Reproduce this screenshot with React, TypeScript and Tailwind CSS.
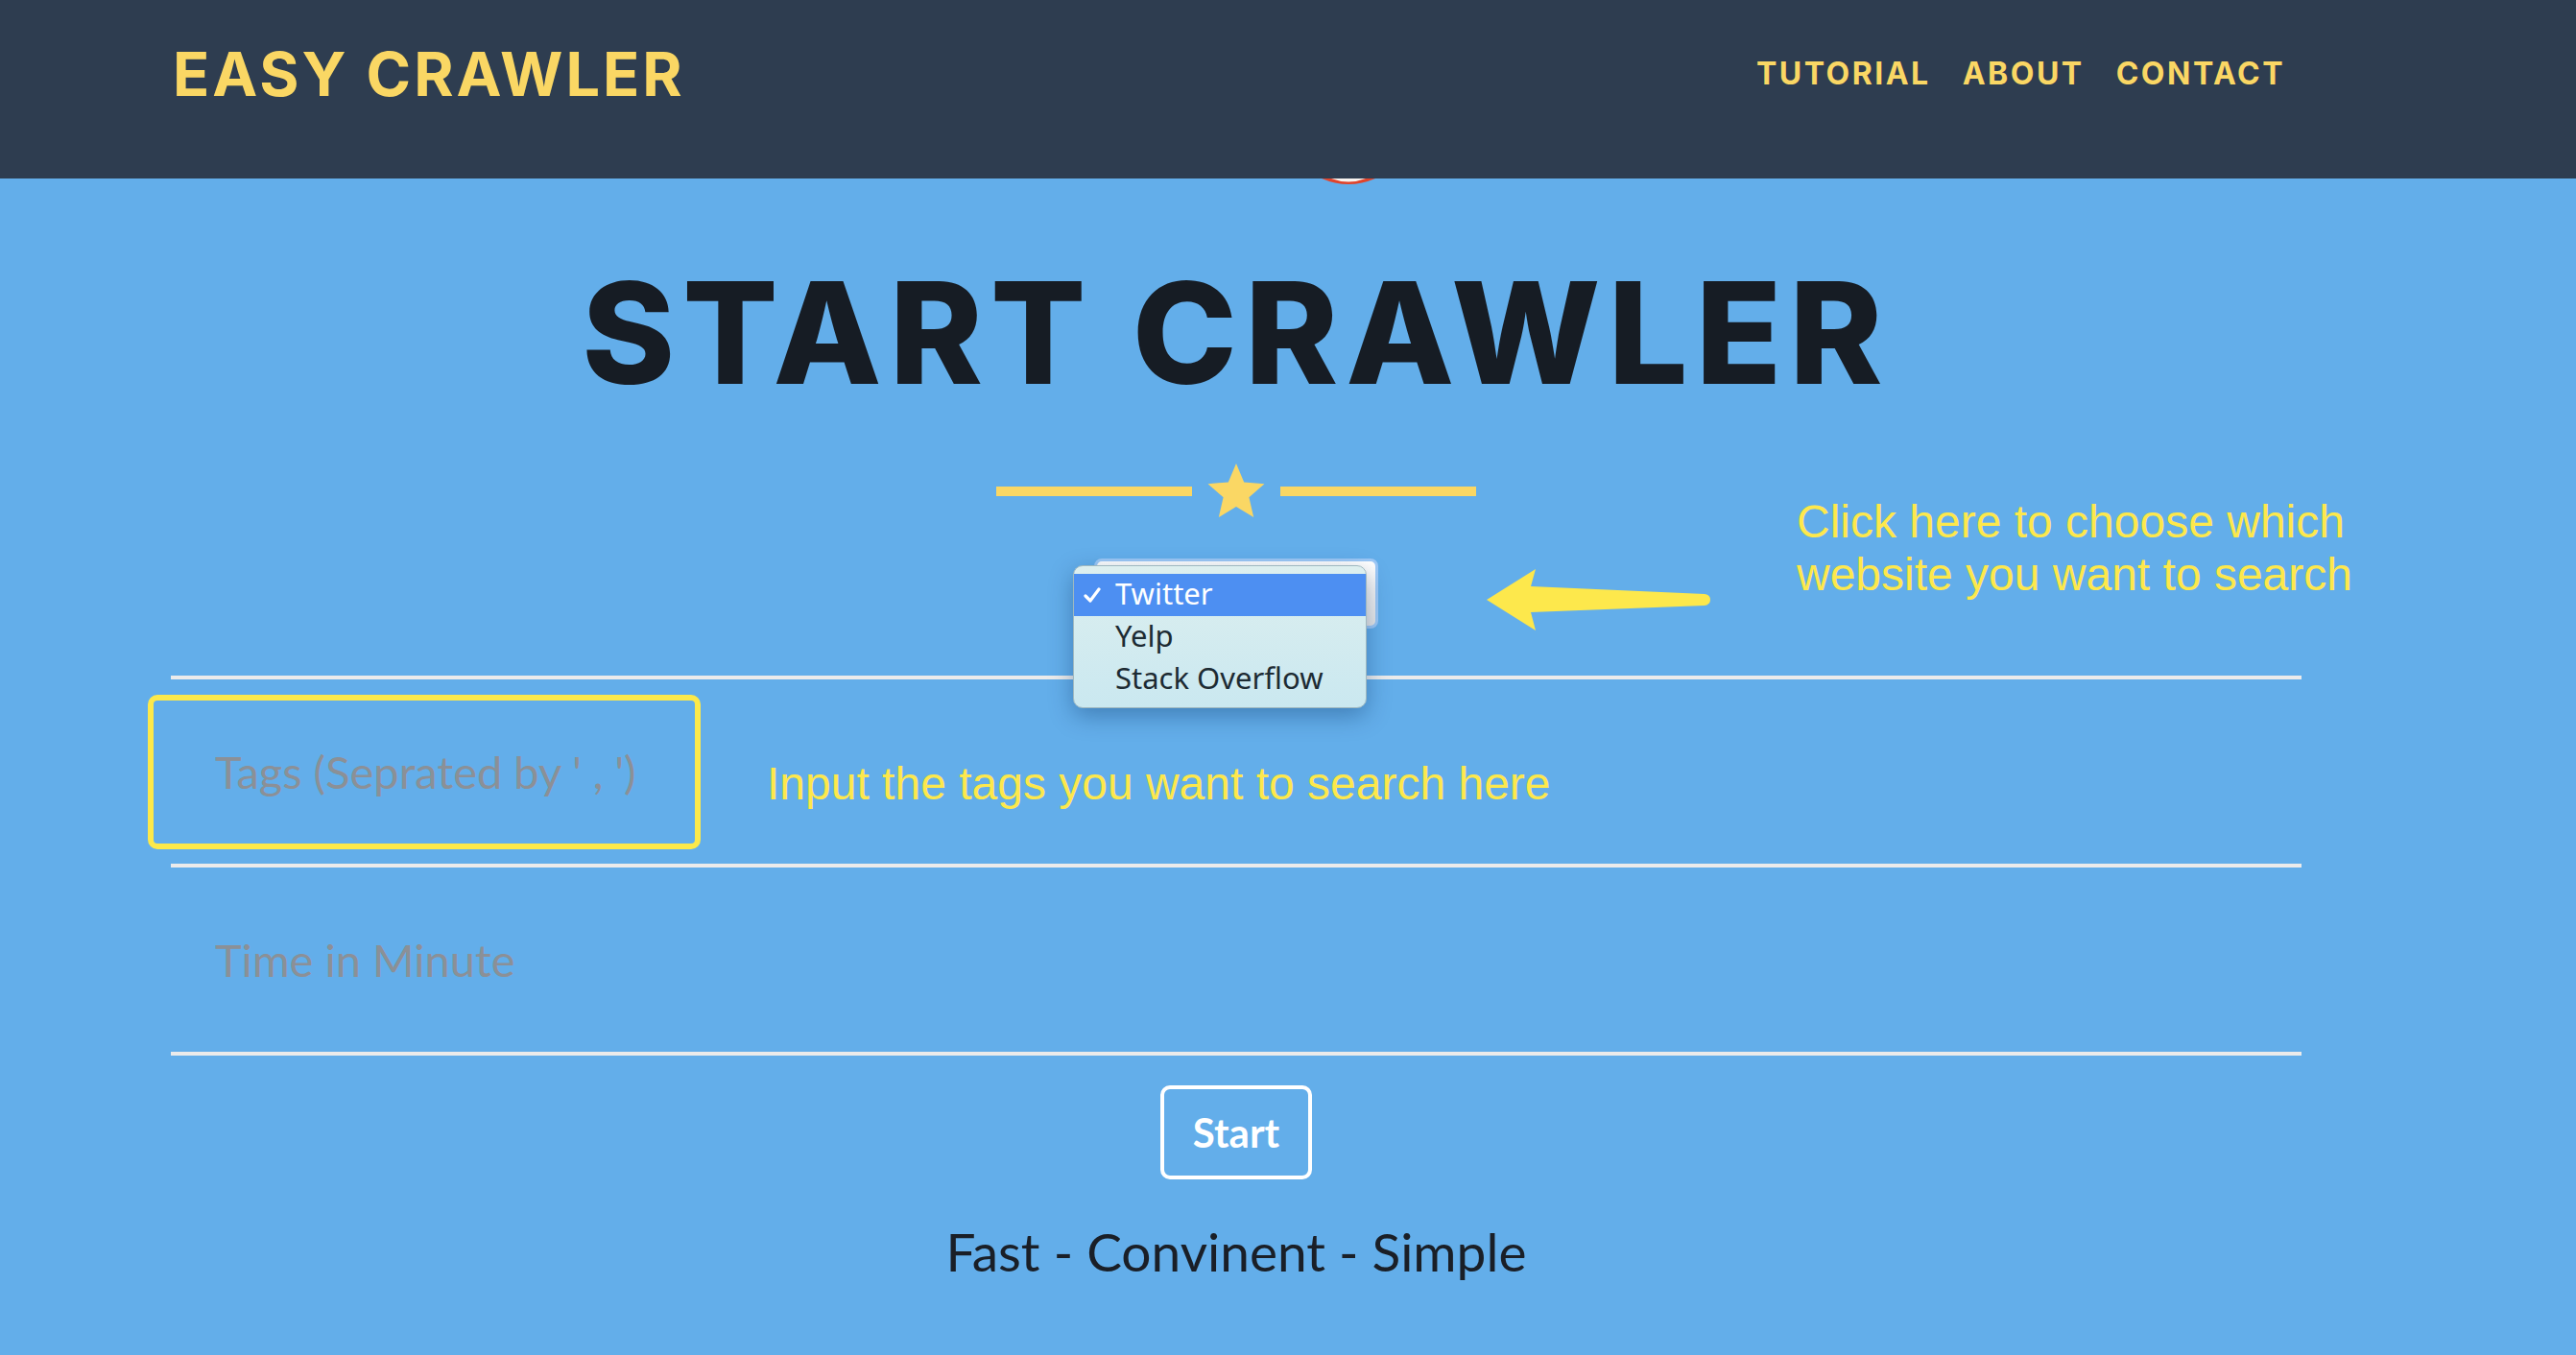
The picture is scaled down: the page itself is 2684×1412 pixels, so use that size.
import React from 'react';

const heading = { fontFamily: 'Inter, "DejaVu Sans", sans-serif' };
const body = { fontFamily: 'Lato, "Open Sans", sans-serif' };
const note = { fontFamily: '"Liberation Sans", Arial, sans-serif' };
const ui = { fontFamily: '"Noto Sans", Inter, sans-serif' };

function Star() {
  return (
    <svg width="60" height="58" viewBox="0 0 60 58">
      <polygon
        fill="#fad764"
        points="30,0 38.2,19.4 59.5,21.2 43.4,35.2 48.2,56 30,45 11.8,56 16.6,35.2 0.5,21.2 21.8,19.4"
      />
    </svg>
  );
}

function Arrow() {
  return (
    <svg width="234" height="65" viewBox="0 0 234 65">
      <path
        fill="#fde84c"
        d="M0 32 L51 0 L46 18 L227 26 Q233 27 233 32 Q233 37 227 38 L46 45 L51 64 Z"
      />
    </svg>
  );
}

function Check() {
  return (
    <svg width="18" height="18" viewBox="0 0 18 18">
      <path d="M2 10 L7 15 L16 3" fill="none" stroke="white" strokeWidth="3.2" strokeLinecap="round" strokeLinejoin="round" />
    </svg>
  );
}

export default function App() {
  return (
    <div className="min-h-screen w-full bg-[#63aeea] overflow-hidden">
      <header className="h-[186px] bg-[#2e3d50] flex items-center justify-between pl-[180px] pr-[303px] pb-[32px]">
        <div style={heading} className="text-[63px] leading-none font-bold tracking-[3px] text-[#fad764]">
          EASY CRAWLER
        </div>
        <nav style={heading} className="flex gap-[33px] text-[32px] leading-none font-bold tracking-[2.5px] text-[#fad764]">
          <a>TUTORIAL</a>
          <a>ABOUT</a>
          <a>CONTACT</a>
        </nav>
      </header>

      <main className="relative w-[2576px] flex flex-col items-center">
        <svg className="absolute left-[1377px] top-0" width="56" height="7" viewBox="0 0 56 7">
          <path d="M0 0 Q28 12 56 0 Z" fill="#e0442c" />
          <path d="M10 0 Q28 7 46 0 Z" fill="#f7f3f0" />
        </svg>

        <h1 style={heading} className="mt-[87px] text-[147px] leading-none font-extrabold tracking-[8px] text-[#161c24]">
          START CRAWLER
        </h1>

        <div className="mt-[63px] h-[58px] flex items-center gap-[16px]">
          <div className="w-[204px] h-[10px] bg-[#fad764]" />
          <Star />
          <div className="w-[204px] h-[10px] bg-[#fad764]" />
        </div>

        <div className="relative mt-[41px] w-[296px] h-[73px] rounded-[8px] border-[3px] border-[#9cc8f6] bg-gradient-to-b from-[#ffffff] to-[#e6e6e6]">
          <div
            style={ui}
            className="absolute left-[-25px] top-[4px] w-[306px] h-[149px] rounded-[10px] bg-gradient-to-b from-[#ddefef] to-[#cae8f0] shadow-[0_8px_24px_rgba(0,40,90,0.35)] border border-[#9fb8c0] pt-[8px] text-[31px] leading-[44px] text-[#1d2b33]"
          >
            <div className="h-[44px] bg-[#4d8ff2] text-white flex items-center pb-[4px]">
              <span className="w-[43px] pl-[10px] pt-[4px] flex items-center"><Check /></span>
              <span>Twitter</span>
            </div>
            <div className="h-[44px] flex items-center pl-[43px] pb-[4px]">Yelp</div>
            <div className="h-[44px] flex items-center pl-[43px] pb-[4px]">Stack Overflow</div>
          </div>
        </div>

        <div className="mt-[49px] w-[2220px]">
          <div className="h-[4px] bg-[#ebebeb]" />
          <div className="h-[192px] flex items-center">
            <div className="-ml-[24px] w-[576px] h-[161px] border-[6px] border-[#fde94a] rounded-[10px] flex items-center pl-[64px]">
              <span style={body} className="text-[47px] text-[#8b9097]">Tags (Seprated by ' , ')</span>
            </div>
            <span style={note} className="ml-[69px] mt-[26px] text-[48px] text-[#fde84c]">
              Input the tags you want to search here
            </span>
          </div>
          <div className="h-[4px] bg-[#ebebeb]" />
          <div className="h-[192px] flex items-center pl-[46px]">
            <span style={body} className="text-[47px] text-[#8b9097]">Time in Minute</span>
          </div>
          <div className="h-[4px] bg-[#ebebeb]" />
        </div>

        <button
          style={body}
          className="mt-[31px] w-[158px] h-[98px] rounded-[10px] border-[4px] border-white text-white text-[42px] font-bold flex items-center justify-center"
        >
          Start
        </button>

        <p style={body} className="mt-[48px] text-[55px] leading-none text-[#1a1f27]">
          Fast - Convinent - Simple
        </p>

        <div style={note} className="absolute left-[1872px] top-[330px] text-[48px] leading-[55px] text-[#fde84c]">
          Click here to choose which
          <br />
          website you want to search
        </div>
        <div className="absolute left-[1549px] top-[407px]">
          <Arrow />
        </div>
      </main>
    </div>
  );
}
